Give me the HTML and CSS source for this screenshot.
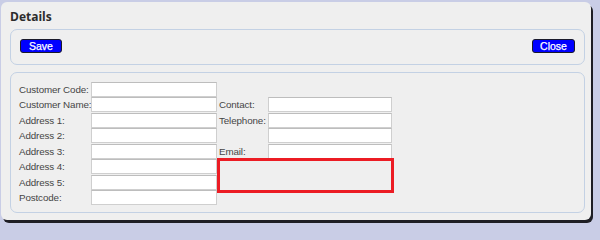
FILE: index.html
```html
<!DOCTYPE html>
<html>
<head>
<meta charset="utf-8">
<link rel="stylesheet" href="styles.css">
</head>
<body>
<div class="dialog">
  <div class="title">Details</div>
  <div class="panel buttons">
    <button class="btn">Save</button>
    <button class="btn">Close</button>
  </div>
  <div class="panel form">
    <div class="grid">
      <label class="lbl">Customer Code:</label><input class="inp" type="text"><span></span><span></span>
      <label class="lbl">Customer Name:</label><input class="inp" type="text"><label class="lbl2">Contact:</label><input class="inp" type="text">
      <label class="lbl">Address 1:</label><input class="inp" type="text"><label class="lbl2">Telephone:</label><input class="inp" type="text">
      <label class="lbl">Address 2:</label><input class="inp" type="text"><span></span><input class="inp" type="text">
      <label class="lbl">Address 3:</label><input class="inp" type="text"><label class="lbl2">Email:</label><input class="inp" type="text">
      <label class="lbl">Address 4:</label><input class="inp" type="text"><div class="highlight"></div>
      <label class="lbl">Address 5:</label><input class="inp" type="text">
      <label class="lbl">Postcode:</label><input class="inp" type="text">
    </div>
  </div>
</div>
</body>
</html>
```
FILE: styles.css
```css
html, body {
  margin: 0;
  padding: 0;
}
body {
  width: 600px;
  height: 227px;
  background: #c9cde6;
  overflow: hidden;
  font-family: "Liberation Sans", Arial, sans-serif;
}
.dialog {
  margin: 2px 0 0 1px;
  width: 590px;
  height: 218px;
  box-sizing: border-box;
  background: #efefef;
  border-radius: 6px;
  box-shadow: 2px 3px 0 #1e1e24;
  padding: 0 6px 0 9px;
  display: flex;
  flex-direction: column;
}
.title {
  font-family: "Open Sans", sans-serif;
  font-weight: 700;
  font-size: 12px;
  color: #2c2c2c;
  height: 27px;
  line-height: 29px;
  padding-left: 0;
}
.panel {
  border: 1px solid #c3d1e4;
  border-radius: 7px;
  box-sizing: border-box;
}
.buttons {
  height: 36px;
  display: flex;
  justify-content: space-between;
  align-items: flex-start;
  padding: 9px 9px 0 9px;
}
.btn {
  height: 14px;
  box-sizing: border-box;
  background: #0000ff;
  color: #ffffff;
  border: 1px solid #1a1a2a;
  border-radius: 3px;
  font-family: "Liberation Sans", Arial, sans-serif;
  font-size: 10.5px;
  font-weight: 400;
  -webkit-text-stroke: 0.25px #ffffff;
  line-height: 12px;
  padding: 0;
  margin: 0;
}
.buttons .btn:first-child { width: 42px; }
.buttons .btn:last-child { width: 43px; }
.form {
  margin-top: 7px;
  height: 141px;
  padding: 9px 0 0 8px;
}
.grid {
  display: grid;
  grid-template-columns: 72px 126px 51px 124px;
  grid-auto-rows: 15px;
  row-gap: 0.43px;
  align-items: center;
}
.lbl, .lbl2 {
  font-size: 9.8px;
  letter-spacing: -0.12px;
  color: #454545;
  white-space: nowrap;
  line-height: 15px;
}
.lbl2 {
  padding-left: 2px;
}
.inp {
  display: block;
  width: 126px;
  height: 15px;
  box-sizing: border-box;
  margin: 0;
  padding: 0;
  border: 1px solid #cfcfcf;
  border-top-color: #bdbdbd;
  background: #ffffff;
  outline: none;
}
.grid .inp:nth-child(4n) {
  width: 124px;
}
.highlight {
  grid-column: 3 / 5;
  grid-row: 6 / 8;
  align-self: stretch;
  margin: -1px -2px -3px 0;
  border: 3px solid #ec1c24;
  box-sizing: border-box;
}
```
